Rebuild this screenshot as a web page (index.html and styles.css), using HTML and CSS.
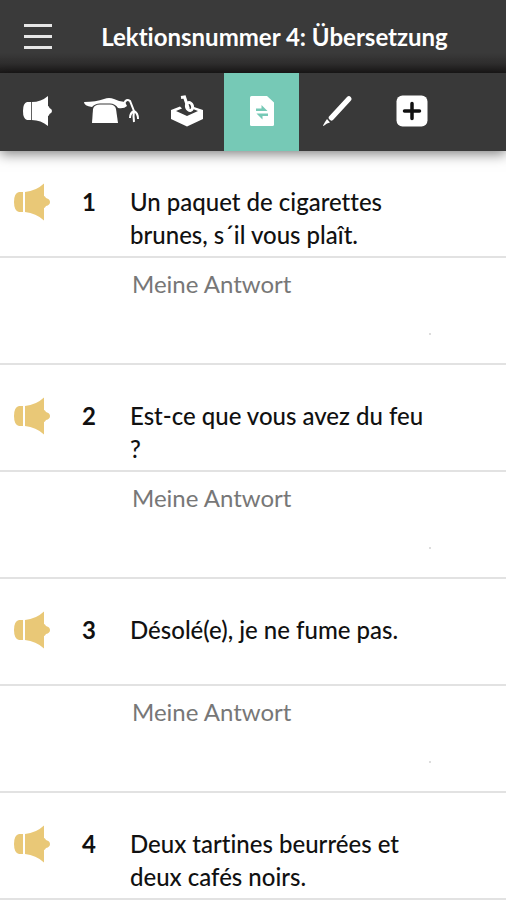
FILE: index.html
```html
<!DOCTYPE html>
<html lang="de">
<head>
<meta charset="utf-8">
<meta name="viewport" content="width=device-width, initial-scale=1">
<title>Lektionsnummer 4: Übersetzung</title>
<link rel="stylesheet" href="styles.css">
</head>
<body>
<svg class="symbols" aria-hidden="true">
  <symbol id="horn" viewBox="0 0 36 38">
    <path d="M9 9H5Q0 10 0 19t5 10h4z"/>
    <path d="M11 9Q22 8 30 .5V13Q31 13 32 15Q36 16 36 19t-4 4Q31 25 30 25V37.500Q22 30 11 29z"/>
  </symbol>
</svg>
<header class="header">
  <button class="menu" aria-label="Menü">
    <svg width="28" height="26" viewBox="0 0 28 26"><path d="M0 1.500h28M0 12.500h28M0 23.500h28" fill="none" stroke="#e6e6e6" stroke-width="3"/></svg>
  </button>
  <h1 class="title">Lektionsnummer 4: Übersetzung</h1>
</header>
<nav class="tabs">
  <button class="tab" aria-label="Anhören">
    <svg width="29" height="30" viewBox="0 0 29 30">
      <path d="M8 6H4Q0 7 0 15t4 9h4z"/>
      <path d="M8.800 6Q18 6 25 0V10Q26 10 26.500 12Q29 13 29 15t-2.500 3Q26 20 25 20V30Q18 24 8.800 24z"/>
    </svg>
  </button>
  <button class="tab" aria-label="Grammatik">
    <svg width="56" height="28" viewBox="0 0 56 28">
      <path d="M0 5Q12 5 20 2Q25 0 30 2Q36 5 41 5L43 9Q40 12 34 11Q31 6.500 26 6.500H16Q11 6.500 8 10Q0 9 0 5z"/>
      <path d="M9 12Q10 7.500 16 7.500H26Q31 7.500 32 12L34 26H8z"/>
      <path d="M40 7Q42 1 46 4Q48 9 50 14M50 14Q46 16 46 21M50 14Q49 19 50 25M50 14Q54 16 54 22" fill="none" stroke="#fff" stroke-width="2"/>
    </svg>
  </button>
  <button class="tab" aria-label="Wortschatz">
    <svg width="34" height="32" viewBox="0 0 34 32">
      <path d="M1 15 10 11.500 12 13.500 6 16 17 21 28 16 23 14 24 12 33 15V24L17 31.500 1 24z"/>
      <path d="M11 2.500 14.500 2 18.500 14" fill="none" stroke="#fff" stroke-width="3"/>
      <ellipse cx="19.500" cy="11.500" rx="3" ry="4" transform="rotate(-18 19.500 11.500)" fill="none" stroke="#fff" stroke-width="3"/>
    </svg>
  </button>
  <button class="tab tab-active" aria-label="Übersetzung" aria-current="page">
    <svg width="24" height="30" viewBox="0 0 24 30">
      <path d="M0 1.500Q0 0 1.500 0H17L24 6.500V28.500Q24 30 22.500 30H1.500Q0 30 0 28.500z"/>
      <path d="M6 12.500H11.500V9L17.500 15H6zM18 17.500H6.500L12.500 23.500V20H18z" fill="#76c9b6"/>
    </svg>
  </button>
  <button class="tab" aria-label="Schreiben">
    <svg width="30" height="32" viewBox="0 0 30 32">
      <path d="M25 2Q27 0 28.700 2Q30.500 4 28.500 6L11 25Q9 26.500 7.500 24.500Q6 23 7 21.500zM5 24 8 27.500 5 28.500 1.500 31 1 30.500 3 27z"/>
    </svg>
  </button>
  <button class="tab" aria-label="Hinzufügen">
    <svg width="32" height="32" viewBox="0 0 32 32">
      <rect x=".5" y=".5" width="31" height="31" rx="6"/>
      <path d="M16 8.500v15M8.500 16h15" fill="none" stroke="#111" stroke-width="3.500" stroke-linecap="round"/>
    </svg>
  </button>
</nav>
<main>
  <ol class="exercises">
    <li>
      <div class="question">
        <button class="play" aria-label="Satz 1 anhören"><svg width="36" height="38"><use href="#horn"/></svg></button>
        <span class="number">1</span>
        <label class="sentence" for="a1">Un paquet de cigarettes brunes, s´il vous plaît.</label>
      </div>
      <div class="answer"><textarea id="a1" placeholder="Meine Antwort"></textarea><i class="handle"></i></div>
    </li>
    <li>
      <div class="question">
        <button class="play" aria-label="Satz 2 anhören"><svg width="36" height="38"><use href="#horn"/></svg></button>
        <span class="number">2</span>
        <label class="sentence" for="a2">Est-ce que vous avez du feu ?</label>
      </div>
      <div class="answer"><textarea id="a2" placeholder="Meine Antwort"></textarea><i class="handle"></i></div>
    </li>
    <li>
      <div class="question">
        <button class="play" aria-label="Satz 3 anhören"><svg width="36" height="38"><use href="#horn"/></svg></button>
        <span class="number">3</span>
        <label class="sentence" for="a3">Désolé(e), je ne fume pas.</label>
      </div>
      <div class="answer"><textarea id="a3" placeholder="Meine Antwort"></textarea><i class="handle"></i></div>
    </li>
    <li>
      <div class="question">
        <button class="play" aria-label="Satz 4 anhören"><svg width="36" height="38"><use href="#horn"/></svg></button>
        <span class="number">4</span>
        <span class="sentence">Deux tartines beurrées et deux cafés noirs.</span>
      </div>
    </li>
  </ol>
</main>
</body>
</html>
```

FILE: styles.css
```css
* {
  box-sizing: border-box;
}

body {
  margin: 0;
  background: #fff;
  color: #111;
  font: 500 24px/33px Lato, "Noto Sans", sans-serif;
  font-variant-ligatures: none;
}

button {
  border: 0;
  padding: 0;
  background: none;
  color: inherit;
}

svg {
  display: block;
  fill: currentColor;
}

.symbols {
  position: absolute;
  width: 0;
  height: 0;
}

.header {
  display: grid;
  grid-template-columns: 75px 1fr 32px;
  align-items: center;
  height: 73px;
  background: linear-gradient(#3a3a3a 72%, #302f2f 86%, #1b1919);
  color: #fff;
}

.menu {
  display: grid;
  justify-items: center;
}

.title {
  margin: 0;
  text-align: center;
  font-size: 24px;
  font-weight: 700;
  white-space: nowrap;
}

.tabs {
  position: relative;
  display: flex;
  height: 78px;
  padding-right: 57px;
  background: #393939;
  color: #fff;
  box-shadow: 0 3px 12px rgba(0, 0, 0, 0.5);
}

.tab {
  display: grid;
  flex: 1;
  place-items: center;
  padding-bottom: 2px;
}

.tab-active {
  background: #76c9b6;
}

.exercises {
  margin: 0;
  padding: 0;
  list-style: none;
}

.question,
.answer {
  display: grid;
  min-height: 107px;
  border-bottom: 2px solid #e2e2e2;
}

.question {
  grid-template-columns: 68px 48px minmax(0, 300px);
  align-items: start;
  padding: 34px 14px 4px;
}

.play {
  height: 33px;
  display: grid;
  align-content: center;
  color: #e9c877;
}

.number {
  font-weight: 700;
}

.answer {
  grid-template-columns: minmax(0, 297px) 2px;
  padding: 9px 0 28px 132px;
}

textarea {
  width: 100%;
  height: 66px;
  border: 0;
  padding: 0;
  background: none;
  color: #111;
  font: inherit;
  font-weight: 400;
  font-variant-ligatures: none;
  resize: none;
  outline: 0;
}

textarea::placeholder {
  color: #777;
  opacity: 1;
}

.handle {
  align-self: end;
  height: 2px;
  background: #ddd;
}
```
